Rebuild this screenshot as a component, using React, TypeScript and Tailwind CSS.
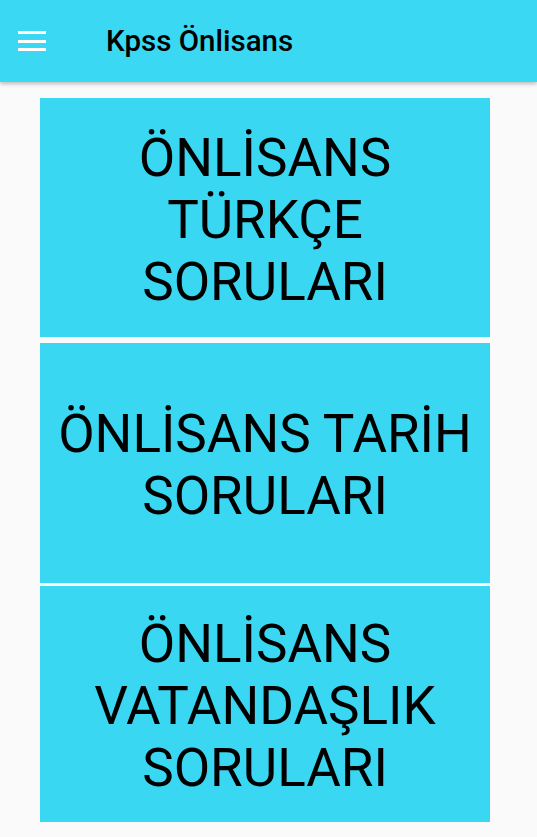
const buttons = [
  { lines: ["ÖNLİSANS", "TÜRKÇE", "SORULARI"], h: "h-[239px]" },
  { lines: ["ÖNLİSANS TARİH", "SORULARI"], h: "h-[240px]" },
  { lines: ["ÖNLİSANS", "VATANDAŞLIK", "SORULARI"], h: "h-[236px]" },
];

export default function App() {
  return (
    <div className="w-[537px] h-[837px] bg-[#fafafa] overflow-hidden font-['Roboto','Liberation_Sans',sans-serif]">
      {/* Toolbar */}
      <header className="relative z-10 h-[82px] bg-[#3ad8f2] flex items-center shadow-[0_2px_4px_rgba(0,0,0,0.25)]">
        <button className="ml-[18px] w-[28px] flex flex-col gap-[5.5px]" aria-label="Menu">
          <span className="block h-[3px] bg-white" />
          <span className="block h-[3px] bg-white" />
          <span className="block h-[3px] bg-white" />
        </button>
        <h1 className="ml-[60px] text-[29.5px] font-medium text-black">Kpss Önlisans</h1>
      </header>

      {/* Category buttons */}
      <main className="pt-[16px] px-[40px] flex flex-col">
        {buttons.map((b, i) => (
          <button
            key={i}
            className={`${b.h} w-[450px] bg-[#39d7f1] pt-[4px] flex flex-col items-center justify-center text-black text-[53px] leading-[62px] ${
              i === 1 ? "mt-[6px]" : i === 2 ? "mt-[3px]" : ""
            }`}
          >
            {b.lines.map((l) => (
              <span key={l}>{l}</span>
            ))}
          </button>
        ))}
      </main>
    </div>
  );
}
